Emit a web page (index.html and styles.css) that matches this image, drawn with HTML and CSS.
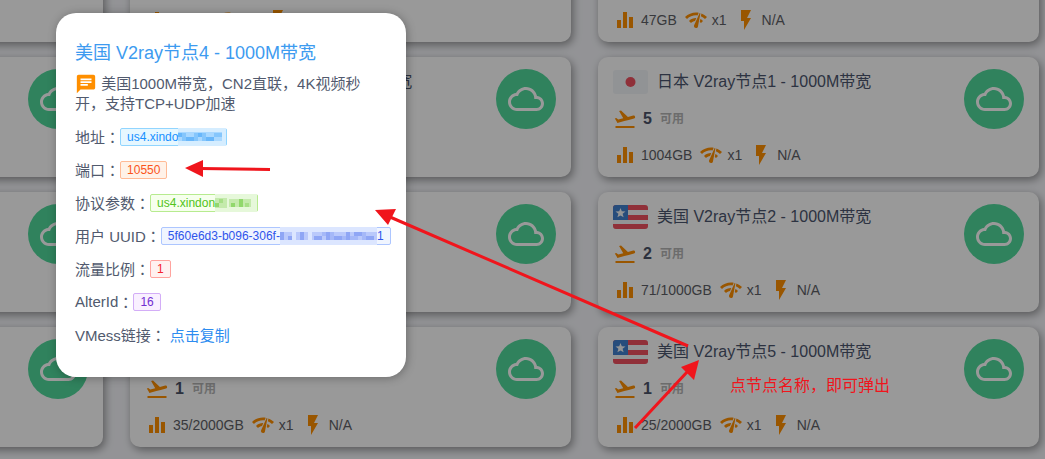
FILE: index.html
```html
<!DOCTYPE html>
<html lang="zh-CN">
<head>
<meta charset="utf-8">
<title>节点列表</title>
<link rel="stylesheet" href="styles.css">
</head>
<body>
<svg class="sprite" aria-hidden="true">
  <symbol id="i-bars" viewBox="0 0 24 24"><path d="M10 20h4V4h-4v16zm-6 0h4v-8H4v8zM16 9v11h4V9h-4z"/></symbol>
  <symbol id="i-plane" viewBox="0 0 24 24"><path d="M2.5 19h19v2h-19zM22.07 9.64c-.21-.8-1.04-1.28-1.84-1.06L14.92 10l-6.9-6.43-1.93.51 4.14 7.17-4.97 1.33-1.97-1.54-1.45.39 1.82 3.16.77 1.33 1.6-.43 5.31-1.42 4.35-1.16L21 11.49c.81-.23 1.28-1.05 1.07-1.85z"/></symbol>
  <symbol id="i-net" viewBox="0 0 24 24"><path d="M15.9 5c-.17 0-.32.09-.41.23l-.07.15-5.18 11.65c-.16.29-.26.61-.26.96 0 1.11.9 2.01 2.01 2.01.96 0 1.77-.68 1.96-1.59l.01-.03L16.4 5.5c0-.28-.22-.5-.5-.5zM1 9l2 2c2.88-2.88 6.79-4.08 10.53-3.62l1.19-2.68C9.89 3.84 4.74 5.27 1 9zm20 2l2-2c-1.64-1.64-3.55-2.82-5.59-3.57l-.53 2.82c1.5.62 2.9 1.53 4.12 2.75zm-4 4l2-2c-.8-.8-1.7-1.42-2.66-1.89l-.55 2.92c.42.27.83.59 1.21.97zM5 13l2 2c1.13-1.13 2.56-1.79 4.03-2l1.28-2.88c-2.63-.08-5.3.87-7.31 2.88z"/></symbol>
  <symbol id="i-bolt" viewBox="0 0 24 24"><path d="M7 2v11h3v9l7-12h-4l4-8z"/></symbol>
  <symbol id="i-cloud" viewBox="0 0 24 24"><path d="M19.35 10.04C18.67 6.59 15.64 4 12 4 9.11 4 6.6 5.64 5.35 8.04 2.34 8.36 0 10.91 0 14c0 3.31 2.69 6 6 6h13c2.76 0 5-2.24 5-5 0-2.64-2.05-4.78-4.65-4.96zM19 18H6c-2.21 0-4-1.79-4-4s1.79-4 4-4h.71C7.37 7.69 9.48 6 12 6c3.04 0 5.5 2.46 5.5 5.5v.5H19c1.66 0 3 1.34 3 3s-1.34 3-3 3z"/></symbol>
  <symbol id="i-chat" viewBox="0 0 24 24"><path d="M20 2H4c-1.1 0-1.99.9-1.99 2L2 22l4-4h14c1.1 0 2-.9 2-2V4c0-1.1-.9-2-2-2zM6 9h12v2H6V9zm8 5H6v-2h8v2zm4-6H6V6h12v2z"/></symbol>
  <symbol id="f-us" viewBox="0 0 35 24"><rect width="35" height="24" rx="3" fill="#f5f7f8"/><path d="M3 0h29a3 3 0 0 1 3 3v2H0V3a3 3 0 0 1 3-3zM0 10h35v5H0zM0 19h35v2a3 3 0 0 1-3 3H3a3 3 0 0 1-3-3z" fill="#f0505f"/><path d="M3 0h12v15H0V3a3 3 0 0 1 3-3z" fill="#4281cf"/><path d="M7.500 3l1.300 3.300 3.700.2-2.900 2.300 1 3.500-3.100-1.900-3.100 1.900 1-3.500L2.500 6.500l3.700-.2z" fill="#f5f7f8"/></symbol>
  <symbol id="f-jp" viewBox="0 0 35 24"><rect width="35" height="24" rx="3" fill="#f2f5f8"/><circle cx="17.500" cy="12" r="5" fill="#ee5060"/></symbol>
</svg>

<main class="nodes">
  <article class="card"><button class="go" aria-label="连接"><svg><use href="#i-cloud"/></svg></button></article>
  <article class="card">
    <div class="info">
      <div class="head"><svg class="flag"><use href="#f-us"/></svg><a class="name" href="#">美国 V2ray节点1 - 1000M带宽</a></div>
      <div class="line"><svg class="icon"><use href="#i-plane"/></svg><b class="count">1</b><span class="state">可用</span></div>
      <div class="line"><svg class="icon"><use href="#i-bars"/></svg><span class="stat">47GB</span><svg class="icon"><use href="#i-net"/></svg><span class="stat">x1</span><svg class="icon"><use href="#i-bolt"/></svg><span class="stat">N/A</span></div>
    </div>
    <button class="go" aria-label="连接"><svg><use href="#i-cloud"/></svg></button>
  </article>
  <article class="card">
    <div class="info">
      <div class="head"><svg class="flag"><use href="#f-us"/></svg><a class="name" href="#">美国 V2ray节点1 - 1000M带宽</a></div>
      <div class="line"><svg class="icon"><use href="#i-plane"/></svg><b class="count">1</b><span class="state">可用</span></div>
      <div class="line"><svg class="icon"><use href="#i-bars"/></svg><span class="stat">47GB</span><svg class="icon"><use href="#i-net"/></svg><span class="stat">x1</span><svg class="icon"><use href="#i-bolt"/></svg><span class="stat">N/A</span></div>
    </div>
    <button class="go" aria-label="连接"><svg><use href="#i-cloud"/></svg></button>
  </article>

  <article class="card"><button class="go" aria-label="连接"><svg><use href="#i-cloud"/></svg></button></article>
  <article class="card">
    <div class="info">
      <div class="head"><svg class="flag"><use href="#f-jp"/></svg><a class="name" href="#">日本 V2ray节点10 - 1000M带宽</a></div>
    </div>
    <button class="go" aria-label="连接"><svg><use href="#i-cloud"/></svg></button>
  </article>
  <article class="card">
    <div class="info">
      <div class="head"><svg class="flag"><use href="#f-jp"/></svg><a class="name" href="#">日本 V2ray节点1 - 1000M带宽</a></div>
      <div class="line"><svg class="icon"><use href="#i-plane"/></svg><b class="count">5</b><span class="state">可用</span></div>
      <div class="line"><svg class="icon"><use href="#i-bars"/></svg><span class="stat">1004GB</span><svg class="icon"><use href="#i-net"/></svg><span class="stat">x1</span><svg class="icon"><use href="#i-bolt"/></svg><span class="stat">N/A</span></div>
    </div>
    <button class="go" aria-label="连接"><svg><use href="#i-cloud"/></svg></button>
  </article>

  <article class="card"><button class="go" aria-label="连接"><svg><use href="#i-cloud"/></svg></button></article>
  <article class="card"><button class="go" aria-label="连接"><svg><use href="#i-cloud"/></svg></button></article>
  <article class="card">
    <div class="info">
      <div class="head"><svg class="flag"><use href="#f-us"/></svg><a class="name" href="#">美国 V2ray节点2 - 1000M带宽</a></div>
      <div class="line"><svg class="icon"><use href="#i-plane"/></svg><b class="count">2</b><span class="state">可用</span></div>
      <div class="line"><svg class="icon"><use href="#i-bars"/></svg><span class="stat">71/1000GB</span><svg class="icon"><use href="#i-net"/></svg><span class="stat">x1</span><svg class="icon"><use href="#i-bolt"/></svg><span class="stat">N/A</span></div>
    </div>
    <button class="go" aria-label="连接"><svg><use href="#i-cloud"/></svg></button>
  </article>

  <article class="card"><button class="go" aria-label="连接"><svg><use href="#i-cloud"/></svg></button></article>
  <article class="card">
    <div class="info">
      <div class="head"><svg class="flag"><use href="#f-us"/></svg></div>
      <div class="line"><svg class="icon"><use href="#i-plane"/></svg><b class="count">1</b><span class="state">可用</span></div>
      <div class="line"><svg class="icon"><use href="#i-bars"/></svg><span class="stat">35/2000GB</span><svg class="icon"><use href="#i-net"/></svg><span class="stat">x1</span><svg class="icon"><use href="#i-bolt"/></svg><span class="stat">N/A</span></div>
    </div>
    <button class="go" aria-label="连接"><svg><use href="#i-cloud"/></svg></button>
  </article>
  <article class="card">
    <div class="info">
      <div class="head"><svg class="flag"><use href="#f-us"/></svg><a class="name" href="#">美国 V2ray节点5 - 1000M带宽</a></div>
      <div class="line"><svg class="icon"><use href="#i-plane"/></svg><b class="count">1</b><span class="state">可用</span></div>
      <div class="line"><svg class="icon"><use href="#i-bars"/></svg><span class="stat">25/2000GB</span><svg class="icon"><use href="#i-net"/></svg><span class="stat">x1</span><svg class="icon"><use href="#i-bolt"/></svg><span class="stat">N/A</span></div>
    </div>
    <button class="go" aria-label="连接"><svg><use href="#i-cloud"/></svg></button>
  </article>
</main>

<div class="shade"></div>

<section class="modal" role="dialog" aria-labelledby="modal-title">
  <h2 class="title" id="modal-title">美国 V2ray节点4 - 1000M带宽</h2>
  <p class="desc"><svg class="chat"><use href="#i-chat"/></svg> 美国1000M带宽，CN2直联，4K视频秒开，支持TCP+UDP加速</p>
  <p class="row">地址<span class="mark">：</span><span class="tag blue">us4.xindo<svg class="mosaic" width="48" height="18" shape-rendering="crispEdges"><path fill="#d5edff" d="M0 0h48v18H0z"/><path fill="#a9d8ff" d="M0 4h44v9H0z"/><path fill="#69b7fa" d="M0 5h4v4H0zM8 9h8v4H8zM20 5h4v4h-4zM28 9h8v4h-8z"/><path fill="#85c6fc" d="M4 5h4v8H4zM16 5h4v8h-4zM24 5h4v8h-4zM36 5h8v4h-8z"/></svg></span></p>
  <p class="row">端口<span class="mark">：</span><span class="tag orange">10550</span></p>
  <p class="row">协议参数<span class="mark">：</span><span class="tag green">us4.xindon<svg class="mosaic" width="42" height="18" shape-rendering="crispEdges"><path fill="#e6f8da" d="M0 0h42v18H0z"/><path fill="#c4eaac" d="M0 4h12v10H0zM14 5h22v8H14z"/><path fill="#91d86c" d="M0 9h4v4H0zM16 9h4v4h-4zM24 5h4v8h-4z"/><path fill="#a7df87" d="M4 5h4v4H4zM30 9h4v4h-4z"/></svg></span></p>
  <p class="row">用户 UUID<span class="mark">：</span><span class="tag indigo">5f60e6d3-b096-306f-<svg class="mosaic" width="97" height="18" shape-rendering="crispEdges"><path fill="#dce6ff" d="M0 0h97v18H0z"/><path fill="#bac9fb" d="M0 5h12v8H0zM16 5h12v8H16zM32 5h65v8H32z"/><path fill="#8fa6f5" d="M0 5h4v8H0zM8 9h4v4H8zM20 5h4v8h-4zM34 9h8v4h-8zM46 5h4v8h-4zM54 9h8v4h-8zM66 5h4v8h-4zM74 5h8v4h-8zM86 9h8v4h-8z"/><path fill="#a5b8f8" d="M42 5h4v4h-4zM50 5h4v8h-4zM62 9h4v4h-4zM70 9h8v4h-8zM82 5h4v8h-4z"/></svg>1</span></p>
  <p class="row">流量比例<span class="mark">：</span><span class="tag red">1</span></p>
  <p class="row">AlterId<span class="mark">：</span><span class="tag purple">16</span></p>
  <p class="row">VMess链接<span class="mark">：</span><a class="copy" href="#">点击复制</a></p>
</section>

<svg class="notes" viewBox="0 0 1045 459" aria-hidden="true">
  <g stroke="#f0151c" stroke-width="3" fill="none"><path d="M200 168.500L270 169.500M688 346L390 217M635 428L688 371"/></g>
  <path fill="#f0151c" d="M185 168l18-8v17zM375 210l21-1-8 16zM699 360l-5 20-13-13z"/>
</svg>
<p class="hint">点节点名称，即可弹出</p>
</body>
</html>
```
FILE: styles.css
```css
* { box-sizing: border-box; }
body {
  margin: 0;
  height: 100vh;
  overflow: hidden;
  position: relative;
  background: #f5f6fa;
  font-family: "Liberation Sans", "Noto Sans CJK SC", sans-serif;
}
p, h2 { margin: 0; }
a { text-decoration: none; }
.sprite { display: none; }
.mark { font-family: "Noto Sans CJK TC", sans-serif; line-height: 20px; }

/* The list is scrolled: its first row and column start outside the window */
.nodes {
  display: grid;
  grid-template-columns: repeat(3, 1fr);
  gap: 15px 27px;
  margin: -78px 6px 0 -338px;
}
.card {
  display: flex;
  justify-content: flex-end;
  align-items: flex-start;
  min-height: 120px;
  padding: 12px 15px 10px;
  border-radius: 10px;
  background: #fff;
  box-shadow: 2px 3px 8px rgba(0, 0, 0, .4);
}
.info { flex: 1; display: grid; gap: 12px; }
.head { display: flex; align-items: center; gap: 9px; height: 26px; }
.flag { width: 35px; height: 24px; }
.name { color: #4c566e; font-size: 16px; line-height: 24px; }
.line { display: flex; align-items: center; height: 24px; line-height: 24px; }
.icon { width: 24px; height: 24px; fill: #ff8f00; }
.count { margin: 0 8px 0 6px; color: #4a5268; font-size: 16px; }
.state { color: #b4b4b4; font-size: 12px; font-weight: bold; }
.stat { margin: 0 7px 0 4px; color: #5e6066; font-size: 14px; }
.go {
  display: grid;
  place-items: center;
  width: 60px;
  height: 60px;
  padding: 0;
  border: 0;
  border-radius: 50%;
  background: #50d99c;
}
.go svg { width: 36px; height: 36px; fill: #fff; }

.shade { position: absolute; inset: 0; background: rgba(0, 0, 0, .4); }

.modal {
  position: absolute;
  left: 56px;
  top: 13px;
  width: 350px;
  padding: 26px 14px 26px 19px;
  border-radius: 20px;
  background: #fff;
  box-shadow: 1px 1px 10px rgba(0, 0, 0, .3);
  color: #515a6e;
  font-size: 15px;
}
.title { color: #3d9bf0; font-size: 18px; font-weight: normal; line-height: 28px; }
.desc { margin: 7px 24px 6px 0; line-height: 20px; }
.chat { width: 22px; height: 22px; margin: -6px 0 -2px; vertical-align: -4px; fill: #ff8f00; }
.row { display: flex; align-items: center; height: 33px; }
.tag {
  display: inline-flex;
  align-items: center;
  height: 18px;
  padding: 0 6px;
  border: 1px solid;
  border-radius: 2px;
  font-size: 12px;
}
.mosaic { flex: none; }
.blue { color: #1890ff; background: #e6f7ff; border-color: #91d5ff; padding-right: 0; }
.orange { color: #fa541c; background: #fff2e8; border-color: #ffbb96; }
.green { color: #52c41a; background: #f6ffed; border-color: #b7eb8f; padding-right: 0; }
.indigo { color: #2f54eb; background: #f0f5ff; border-color: #adc6ff; }
.red { color: #f5222d; background: #fff1f0; border-color: #ffa39e; }
.purple { color: #722ed1; background: #f9f0ff; border-color: #d3adf7; }
.copy { margin-left: 4px; color: #2d8cf0; }

.notes { position: absolute; left: 0; top: 0; width: 1045px; height: 459px; pointer-events: none; }
.hint { position: absolute; left: 730px; top: 374px; color: #f0151c; font-size: 16px; line-height: 24px; }
```
